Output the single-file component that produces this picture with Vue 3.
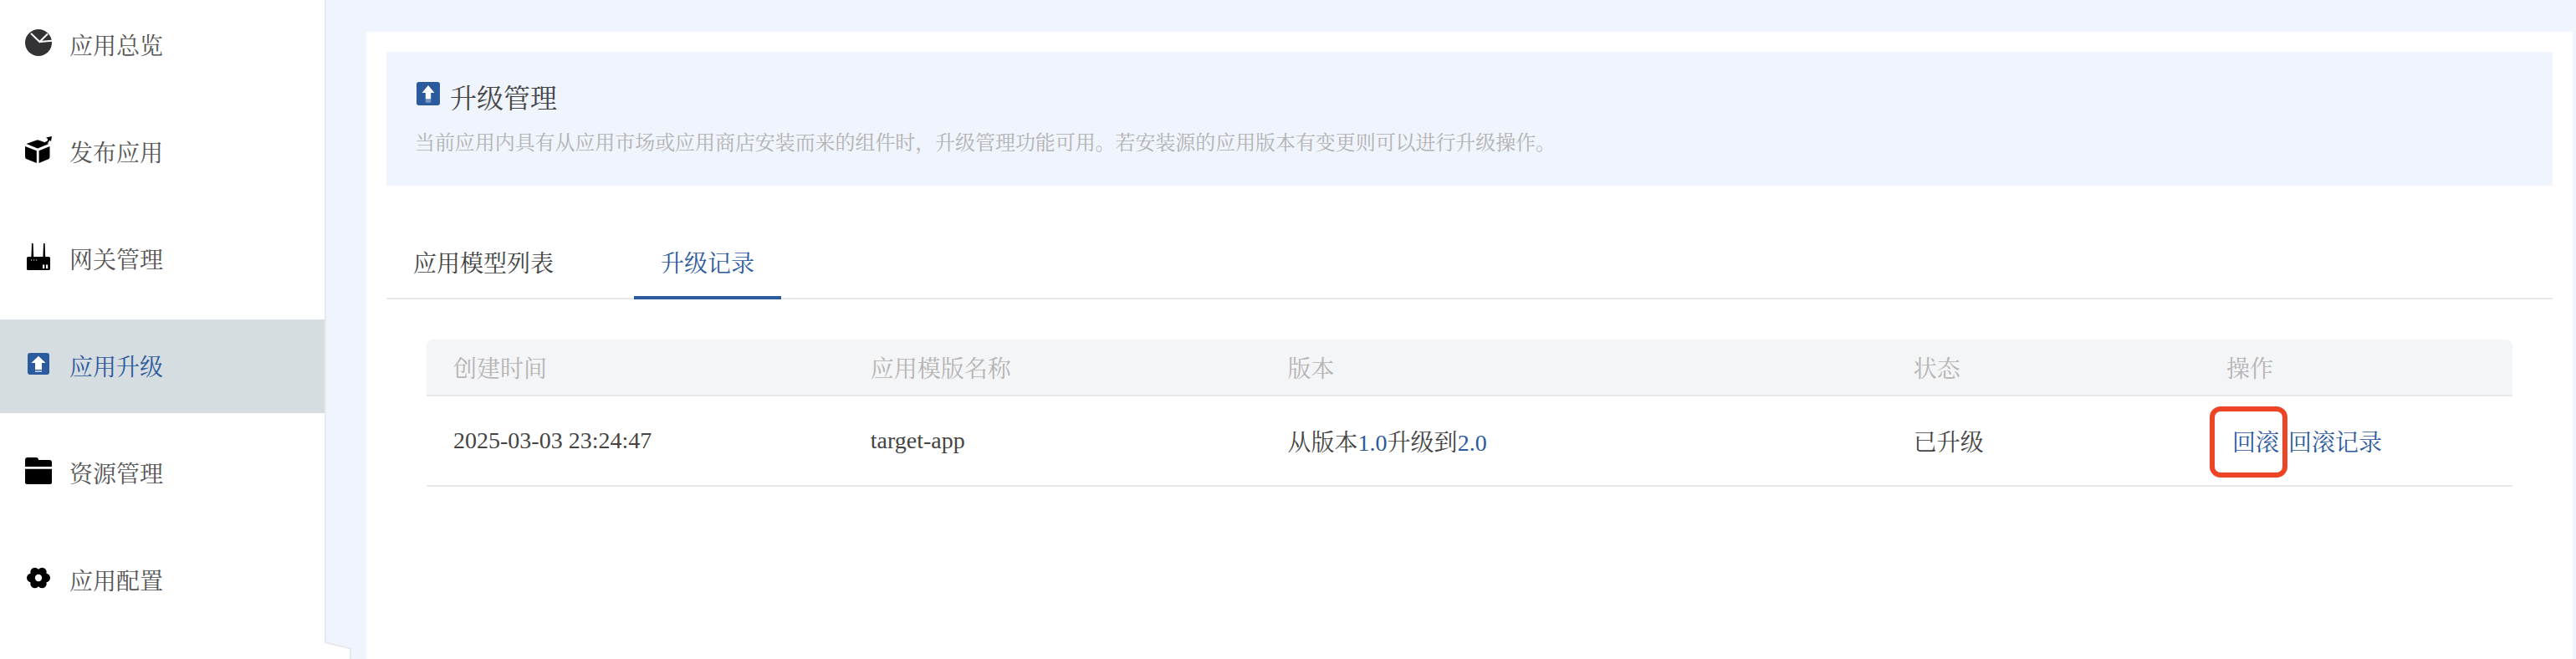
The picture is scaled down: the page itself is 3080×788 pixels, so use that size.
<script setup>
const menu = [
  { label: '应用总览', icon: 'pie' },
  { label: '发布应用', icon: 'box' },
  { label: '网关管理', icon: 'router' },
  { label: '应用升级', icon: 'up', active: true },
  { label: '资源管理', icon: 'folder' },
  { label: '应用配置', icon: 'gear' }
]
const lobes = [0, 60, 120, 180, 240, 300].map((a) => ({
  x: 16 + 8.6 * Math.cos((a * Math.PI) / 180),
  y: 16 + 8 * Math.sin((a * Math.PI) / 180)
}))
</script>

<template>
  <div class="page">
    <aside class="sidebar">
      <ul class="menu">
        <li v-for="m in menu" :key="m.label" class="item" :class="{ active: m.active }">
          <svg class="mi" viewBox="0 0 32 32">
            <template v-if="m.icon === 'pie'">
              <circle cx="16" cy="16" r="16" fill="#333336" />
              <path d="M7 5 17.4 15 27 5.5M17.4 15 33 13.6" fill="none" stroke="#fff" stroke-width="2" />
            </template>
            <template v-else-if="m.icon === 'box'">
              <path d="M1.5 9 14 4.6a3 3 0 0 1 2 0L28.5 9 15 14.6Z" fill="#000" />
              <path d="M0 12 13.8 17.2V32L2.6 27.6A3 3 0 0 1 0 25Z" fill="#000" />
              <path d="M16.6 17.2 29.5 12V25a3 3 0 0 1-2.2 2.6L16.6 32Z" fill="#000" />
              <path d="M24 7.6c3 0 4.200-1.600 4.200-4.600" fill="none" stroke="#000" stroke-width="2" />
              <path d="M25 1.400 32 0 31 6Z" fill="#000" />
            </template>
            <template v-else-if="m.icon === 'router'">
              <path d="M8 0h1.600l.6 16H7.400ZM22 0h1.600l.6 16h-2.800Z" fill="#000" />
              <rect x="2" y="16" width="28" height="16" rx="1.600" fill="#000" />
              <path d="M7 19.400h1.200v1.200H7ZM10 19.400h1.200v1.200H10ZM13 19.400h1.200v1.200H13Z" fill="#fff" />
              <path d="M21 25.500h2.200V30H21ZM25 25.500h2.200V30H25Z" fill="#fff" />
            </template>
            <template v-else-if="m.icon === 'up'">
              <rect x="3" y="3" width="26" height="26" rx="3" fill="#2b5a9e" />
              <path d="M16 6.700 24.600 15H20V23h-8v-8H7.400Z" fill="#fff" />
              <path d="M12 24h8v2h-8Z" fill="#a9bfdc" />
            </template>
            <template v-else-if="m.icon === 'folder'">
              <path d="M0 11V3a3 3 0 0 1 3-3h10a3 3 0 0 1 3 3h13a3 3 0 0 1 3 3v5Z" fill="#000" />
              <path d="M0 13.700h32V30a2 2 0 0 1-2 2H2a2 2 0 0 1-2-2Z" fill="#000" />
            </template>
            <template v-else>
              <circle v-for="(l, i) in lobes" :key="i" :cx="l.x" :cy="l.y" r="5.400" fill="#000" />
              <circle cx="16" cy="16" r="9" fill="#000" />
              <circle cx="16" cy="16" r="4.200" fill="#fff" />
            </template>
          </svg>
          <span class="label">{{ m.label }}</span>
        </li>
      </ul>
    </aside>
    <svg class="notch" viewBox="0 0 34 22">
      <path d="M0 22V1L31 8.500V22Z" fill="#fff" />
      <path d="M0 1 31 8.500V22" fill="none" stroke="#e6e9ee" stroke-width="2" />
    </svg>
    <main class="main">
      <section class="card">
        <header class="banner">
          <div class="title-row">
            <svg class="ti" viewBox="0 0 28 28">
              <rect width="28" height="28" rx="3" fill="#2b5a9e" />
              <path d="M14 4 21.500 13H17.200V20.500H10.800V13H6.500Z" fill="#fff" />
              <path d="M10.800 21.500h6.400v1.200h-6.400ZM10.800 23.500h6.400v1h-6.400Z" fill="#a9bfdc" />
            </svg>
            <h1>升级管理</h1>
          </div>
          <p>当前应用内具有从应用市场或应用商店安装而来的组件时，升级管理功能可用。若安装源的应用版本有变更则可以进行升级操作。</p>
        </header>
        <nav class="tabs">
          <a class="tab">应用模型列表</a>
          <a class="tab on">升级记录</a>
        </nav>
        <div class="table">
          <div class="grid head">
            <div>创建时间</div>
            <div>应用模版名称</div>
            <div>版本</div>
            <div>状态</div>
            <div>操作</div>
          </div>
          <div class="grid row">
            <div>2025-03-03 23:24:47</div>
            <div>target-app</div>
            <div>从版本<span class="link">1.0</span>升级到<span class="link">2.0</span></div>
            <div>已升级</div>
            <div class="acts">
              <a class="link first">回滚<i class="mark"></i></a>
              <a class="link">回滚记录</a>
            </div>
          </div>
        </div>
      </section>
    </main>
  </div>
</template>

<style>
html, body { margin: 0; background: #f0f4fd; }
</style>

<style scoped>
.page {
  position: relative;
  display: flex;
  width: 3080px;
  height: 788px;
  overflow: hidden;
  background: #f0f4fd;
  font-family: "Liberation Serif", "Noto Serif CJK SC", "Noto Sans CJK SC", serif;
  font-size: 28px;
  color: #444;
}
.sidebar {
  flex: none;
  width: 388px;
  background: #fff;
  border-right: 2px solid #e6e9ee;
}
.menu {
  list-style: none;
  margin: -2px 0 0;
  padding: 0;
  display: flex;
  flex-direction: column;
  gap: 16px;
}
.item {
  height: 112px;
  padding-left: 30px;
  display: flex;
  align-items: center;
  gap: 21px;
  color: #555;
}
.item.active { background: #d6dde0; color: #2b5a9e; }
.label { margin-bottom: 2px; }
.mi { width: 32px; height: 32px; flex: none; margin-bottom: 6px; }
.notch { position: absolute; left: 388px; top: 767px; width: 34px; height: 22px; }
.main { flex: 1; padding: 38px 4px 0 48px; min-width: 0; }
.card {
  height: 750px;
  box-sizing: border-box;
  padding: 24px;
  background: #fff;
}
.banner {
  height: 160px;
  box-sizing: border-box;
  padding: 34px 0 0 34px;
  background: #f0f4fd;
}
.title-row { display: flex; align-items: flex-start; gap: 12px; margin-left: 2px; }
.ti { width: 28px; height: 28px; flex: none; margin-top: 2px; }
h1 { margin: 0; font-size: 32px; line-height: 44px; font-weight: 400; color: #444; }
.banner p { margin: 13px 0 0; font-size: 24px; line-height: 36px; color: #b2b2b2; white-space: nowrap; letter-spacing: -0.07px; }
.tabs {
  display: flex;
  gap: 64px;
  margin-top: 72px;
  border-bottom: 2px solid #e8e8e8;
}
.tab {
  padding: 0 32px 16px;
  line-height: 44px;
  margin-bottom: -2px;
  border-bottom: 4px solid transparent;
  color: #444;
}
.tab.on { color: #2b5a9e; border-bottom-color: #2b5a9e; }
.table { margin: 48px 48px 0; }
.grid { display: grid; grid-template-columns: 20fr 20fr 30fr 15fr 15fr; align-items: center; }
.grid > div { padding-left: 32px; white-space: nowrap; }
.head {
  height: 68px;
  box-sizing: border-box;
  background: #f4f5f7;
  border-bottom: 2px solid #e8e8e8;
  border-radius: 8px 8px 0 0;
  color: #b4b4b4;
}
.row {
  height: 108px;
  box-sizing: border-box;
  border-bottom: 2px solid #e8e8e8;
  color: #444;
}
.link { color: #2b5a9e; }
.acts { display: flex; align-items: center; }
.first { position: relative; margin: 0 11px 0 7px; }
.mark {
  position: absolute;
  left: -27px;
  top: calc(50% - 41px);
  width: 93px;
  height: 85px;
  box-sizing: border-box;
  border: 6px solid #ee4426;
  border-radius: 13px;
}
</style>
